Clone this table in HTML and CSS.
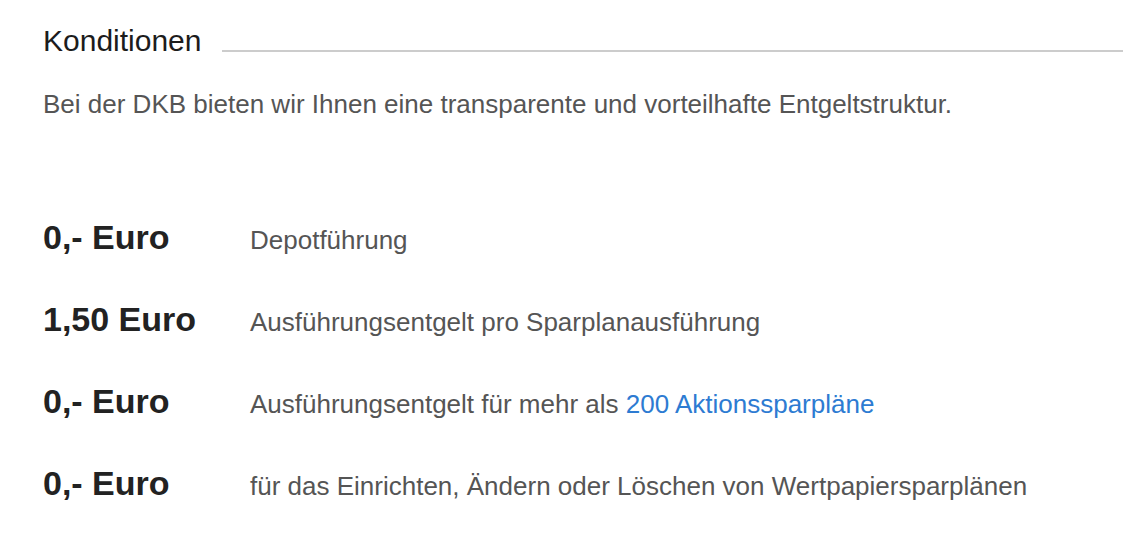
FILE: index.html
```html
<!DOCTYPE html>
<html lang="de">
<head>
<meta charset="utf-8">
<link rel="stylesheet" href="styles.css">
</head>
<body>
<section class="conditions">
  <div class="heading">
    <h2 class="heading-title">Konditionen</h2>
    <span class="heading-rule"></span>
  </div>
  <p class="intro">Bei der DKB bieten wir Ihnen eine transparente und vorteilhafte Entgeltstruktur.</p>
  <ul class="fees">
    <li class="fee"><span class="fee-price">0,- Euro</span><span class="fee-desc">Depotführung</span></li>
    <li class="fee"><span class="fee-price">1,50 Euro</span><span class="fee-desc">Ausführungsentgelt pro Sparplanausführung</span></li>
    <li class="fee"><span class="fee-price">0,- Euro</span><span class="fee-desc">Ausführungsentgelt für mehr als <a class="link" href="#">200 Aktionssparpläne</a></span></li>
    <li class="fee"><span class="fee-price">0,- Euro</span><span class="fee-desc">für das Einrichten, Ändern oder Löschen von Wertpapiersparplänen</span></li>
  </ul>
</section>
</body>
</html>
```
FILE: styles.css
```css
* { box-sizing: border-box; }
html, body { margin: 0; padding: 0; background: #fff; }
body { font-family: "Liberation Sans", Arial, Helvetica, sans-serif; }
.conditions { padding: 23px 17px 0 43px; }
.heading { display: flex; gap: 21px; height: 36px; }
.heading-title { margin: 0; font-size: 30px; font-weight: normal; color: #1c1c1c; line-height: 36px; white-space: nowrap; }
.heading-rule { flex: 1; height: 2px; background: #cccccc; align-self: flex-end; margin-bottom: 7px; }
.intro { margin: 30px 0 0; font-size: 26px; line-height: 30px; color: #555; white-space: nowrap; }
.fees { list-style: none; margin: 98px 0 0; padding: 0; display: flex; flex-direction: column; gap: 42px; }
.fee { display: flex; align-items: baseline; height: 40px; line-height: 40px; white-space: nowrap; }
.fee-price { width: 207px; flex: none; font-size: 34px; font-weight: bold; color: #222; }
.fee-desc { font-size: 26px; color: #555; }
.link { color: #2d7bd2; text-decoration: none; }
```
